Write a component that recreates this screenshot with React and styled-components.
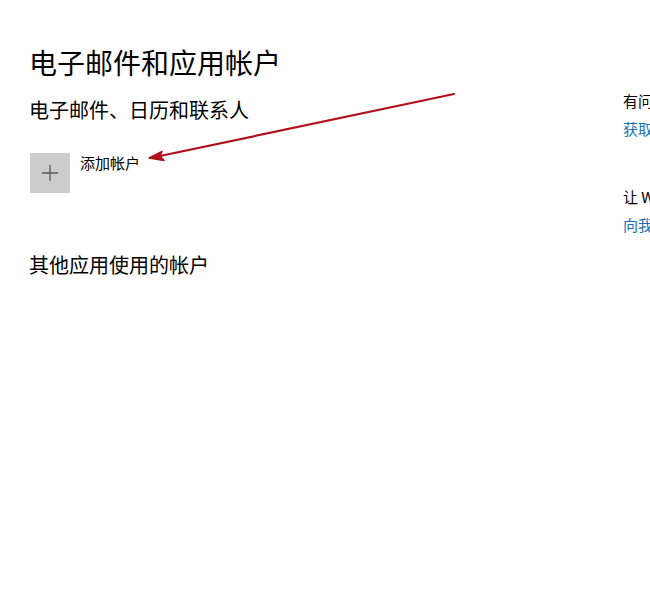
import React from "react";
import styled, { createGlobalStyle } from "styled-components";

const Global = createGlobalStyle`
  html, body { margin: 0; padding: 0; background: #fff; }
  body {
    font-family: "Noto Sans CJK SC", "Noto Sans", sans-serif;
    color: #000;
    overflow: hidden;
  }
`;

const Page = styled.div`
  position: relative;
  width: 650px;
  height: 600px;
  overflow: hidden;
  display: grid;
  grid-template-columns: 623px 260px;
`;

const Main = styled.main`
  padding: 42px 0 0 29px;
  display: flex;
  flex-direction: column;
`;

const Title = styled.h1`
  margin: 0;
  font-size: 28px;
  font-weight: 400;
  line-height: 40px;
`;

const SectionTitle = styled.h2`
  margin: ${(p) => p.$top}px 0 0 0;
  font-size: 20px;
  font-weight: 400;
  line-height: 28px;
`;

const AddRow = styled.button`
  margin-top: 29px;
  margin-left: 1px;
  padding: 0;
  border: 0;
  background: none;
  display: flex;
  align-items: flex-start;
  gap: 10px;
  font: inherit;
  cursor: pointer;
  text-align: left;
  width: max-content;
`;

const AddTile = styled.span`
  width: 40px;
  height: 40px;
  background: #cccccc;
  display: flex;
  align-items: center;
  justify-content: center;
`;

const AddLabel = styled.span`
  font-size: 15px;
  line-height: 20px;
  color: #000;
`;

const Aside = styled.aside`
  padding-top: 91px;
  display: flex;
  flex-direction: column;
`;

const HelpBlock = styled.div`
  display: flex;
  flex-direction: column;
  gap: 8px;
  margin-bottom: ${(p) => p.$bottom || 0}px;
`;

const HelpText = styled.div`
  font-size: 15px;
  line-height: 20px;
  white-space: nowrap;
`;

const HelpLink = styled.a`
  font-size: 15px;
  line-height: 20px;
  color: #1a6fb5;
  text-decoration: none;
  white-space: nowrap;
`;

const ArrowLayer = styled.svg`
  position: absolute;
  left: 0;
  top: 0;
  pointer-events: none;
`;

export default function App() {
  return (
    <>
      <Global />
      <Page>
        <Main>
          <Title>电子邮件和应用帐户</Title>
          <SectionTitle $top={14}>电子邮件、日历和联系人</SectionTitle>
          <AddRow>
            <AddTile>
              <svg width="18" height="18" viewBox="0 0 18 18">
                <path d="M9 1v16M1 9h16" stroke="#5a5a5a" strokeWidth="1.3" fill="none" />
              </svg>
            </AddTile>
            <AddLabel>添加帐户</AddLabel>
          </AddRow>
          <SectionTitle $top={58}>其他应用使用的帐户</SectionTitle>
        </Main>
        <Aside>
          <HelpBlock $bottom={48}>
            <HelpText>有问题吗?</HelpText>
            <HelpLink href="#">获取帮助</HelpLink>
          </HelpBlock>
          <HelpBlock>
            <HelpText>让 Windows 变得更好</HelpText>
            <HelpLink href="#">向我们提供反馈</HelpLink>
          </HelpBlock>
        </Aside>
        <ArrowLayer width="650" height="600" viewBox="0 0 650 600">
          <line x1="454" y1="94" x2="160" y2="156" stroke="#b0101c" strokeWidth="2.2" strokeLinecap="round" />
          <path d="M149 158 L162 151.5 L160 156 L164 160.5 Z" fill="#b0101c" stroke="#b0101c" strokeWidth="1.5" strokeLinejoin="round" />
        </ArrowLayer>
      </Page>
    </>
  );
}
